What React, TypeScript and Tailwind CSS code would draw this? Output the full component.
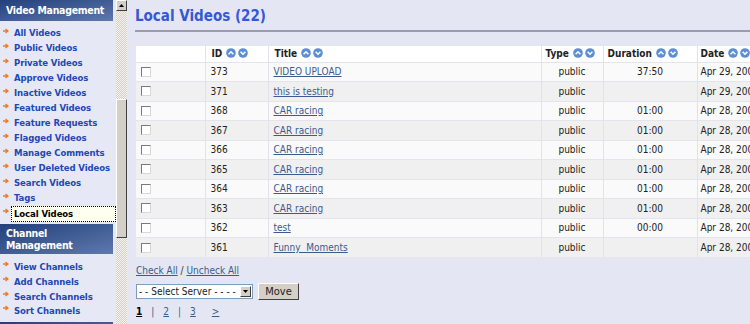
import React from "react";

const font = "font-['DejaVu_Sans_Condensed','DejaVu_Sans',sans-serif]";

const videoLinks = [
  "All Videos",
  "Public Videos",
  "Private Videos",
  "Approve Videos",
  "Inactive Videos",
  "Featured Videos",
  "Feature Requests",
  "Flagged Videos",
  "Manage Comments",
  "User Deleted Videos",
  "Search Videos",
  "Tags",
];

const channelLinks = ["View Channels", "Add Channels", "Search Channels", "Sort Channels"];

const rows = [
  { id: 373, title: "VIDEO UPLOAD", type: "public", duration: "37:50", date: "Apr 29, 2008" },
  { id: 371, title: "this is testing", type: "public", duration: "", date: "Apr 29, 2008" },
  { id: 368, title: "CAR racing", type: "public", duration: "01:00", date: "Apr 28, 2008" },
  { id: 367, title: "CAR racing", type: "public", duration: "01:00", date: "Apr 28, 2008" },
  { id: 366, title: "CAR racing", type: "public", duration: "01:00", date: "Apr 28, 2008" },
  { id: 365, title: "CAR racing", type: "public", duration: "01:00", date: "Apr 28, 2008" },
  { id: 364, title: "CAR racing", type: "public", duration: "01:00", date: "Apr 28, 2008" },
  { id: 363, title: "CAR racing", type: "public", duration: "01:00", date: "Apr 28, 2008" },
  { id: 362, title: "test", type: "public", duration: "00:00", date: "Apr 28, 2008" },
  { id: 361, title: "Funny  Moments", type: "public", duration: "", date: "Apr 28, 2008" },
];

function Arrow() {
  return (
    <svg width="6" height="6" viewBox="0 0 6 6" className="shrink-0 mt-[-6px]">
      <path d="M0 3H4M2.5 1L5 3L2.5 5" stroke="#f07a22" strokeWidth="1.4" fill="none" />
    </svg>
  );
}

function SortIcons() {
  return (
    <span className="inline-flex gap-[2px] ml-[4px] align-[-1px]">
      <svg width="10" height="10" viewBox="0 0 10 10">
        <circle cx="5" cy="5" r="4.8" fill="#5b8ed6" />
        <path d="M2.6 6.2L5 3.8L7.4 6.2" stroke="#fff" strokeWidth="1.6" fill="none" />
      </svg>
      <svg width="10" height="10" viewBox="0 0 10 10">
        <circle cx="5" cy="5" r="4.8" fill="#5b8ed6" />
        <path d="M2.6 3.8L5 6.2L7.4 3.8" stroke="#fff" strokeWidth="1.6" fill="none" />
      </svg>
    </span>
  );
}

function SideHeader({ children, tight }: { children: React.ReactNode; tight?: boolean }) {
  return (
    <div
      className={`w-[113px] bg-gradient-to-br from-[#23407c] to-[#5f79ad] text-white font-bold text-[10.5px] tracking-[-0.3px] leading-[11px] px-[6px] whitespace-nowrap ${
        tight ? "py-[3px]" : "py-[4px]"
      }`}
    >
      {children}
    </div>
  );
}

function Checkbox() {
  return (
    <div className="w-[10px] h-[10px] bg-white border border-t-[#7a7a7a] border-l-[#7a7a7a] border-b-[#d8d8d8] border-r-[#d8d8d8]" />
  );
}

export default function App() {
  return (
    <div className={`${font} w-[750px] h-[324px] overflow-hidden flex bg-[#e4e7f3]`}>
      {/* Sidebar */}
      <div className="w-[128px] shrink-0 flex bg-[#e6e9f5]">
        <div className="w-[116px]">
          <SideHeader>
            <div className="py-[1px]">Video Management</div>
          </SideHeader>
          <ul className="pt-[5px]">
            {videoLinks.map((l) => (
              <li key={l} className="flex items-center gap-[4px] pl-[3px] h-[15px] text-[9.5px] tracking-[-0.1px] font-bold text-[#2347b4] whitespace-nowrap">
                <Arrow />
                <span className="pl-[1px]">{l}</span>
              </li>
            ))}
            <li className="flex items-center gap-[2px] pl-[3px] h-[15px] text-[9.5px] tracking-[-0.1px] font-bold">
              <Arrow />
              <span className="flex-1 h-[16px] border border-dotted border-black bg-[#fffff0] pl-[2px] leading-[14px] text-black">
                Local Videos
              </span>
            </li>
          </ul>
          <div className="pt-[3px]">
            <SideHeader tight>
              <div className="py-[0.5px]">Channel</div>
              <div className="py-[0.5px]">Management</div>
            </SideHeader>
          </div>
          <ul className="pt-[6px] pb-[3px]">
            {channelLinks.map((l) => (
              <li key={l} className="flex items-center gap-[4px] pl-[3px] h-[14.7px] text-[9.5px] tracking-[-0.1px] font-bold text-[#2347b4] whitespace-nowrap">
                <Arrow />
                <span className="pl-[1px]">{l}</span>
              </li>
            ))}
          </ul>
          <SideHeader>&nbsp;</SideHeader>
        </div>
        {/* scrollbar */}
        <div className="w-[11px] flex flex-col bg-[repeating-conic-gradient(#d4d0c8_0%_25%,#f4f3ef_0%_50%)] bg-[length:2px_2px]">
          <div className="h-[11px] bg-[#d4d0c8] border border-t-white border-l-white border-b-[#404040] border-r-[#404040] flex items-center justify-center">
            <svg width="5" height="3" viewBox="0 0 5 3">
              <path d="M0 3L2.5 0L5 3Z" fill="#000" />
            </svg>
          </div>
          <div className="h-[88px]" />
          <div className="h-[139px] bg-[#d4d0c8] border border-t-white border-l-white border-b-[#404040] border-r-[#404040]" />
        </div>
      </div>

      {/* Main */}
      <div className="flex-1 pl-[7px] pt-[7px] min-w-0">
        <h1 className="text-[15px] font-bold text-[#3558d8] leading-[18px]">Local Videos (22)</h1>
        <div className="mt-[5px] h-[2px] bg-[#9a9cab] w-[700px]" />
        <table className="mt-[14px] ml-[1px] border-collapse text-[10px] text-[#222] table-fixed w-[700px]">
          <colgroup>
            <col className="w-[69px]" />
            <col className="w-[63px]" />
            <col className="w-[273px]" />
            <col className="w-[62px]" />
            <col className="w-[94px]" />
            <col className="w-[139px]" />
          </colgroup>
          <thead>
            <tr className="h-[16px] bg-white text-left font-bold">
              <th className="border-r border-[#e2e2ea]" />
              <th className="pl-[6px] border-r border-[#e2e2ea]">ID<SortIcons /></th>
              <th className="pl-[6px] border-r border-[#e2e2ea]">Title<SortIcons /></th>
              <th className="pl-[4px] border-r border-[#e2e2ea]">Type<SortIcons /></th>
              <th className="pl-[4px] border-r border-[#e2e2ea]">Duration<SortIcons /></th>
              <th className="pl-[3px]">Date<SortIcons /></th>
            </tr>
          </thead>
          <tbody>
            {rows.map((r, i) => (
              <tr key={r.id} className={`h-[19.5px] border-t border-[#e4e4ec] ${i % 2 === 0 ? "bg-[#fafafa]" : "bg-[#f0f0f0]"}`}>
                <td className="pl-[5px] border-r border-[#e2e2ea]">
                  <Checkbox />
                </td>
                <td className="pl-[5px] border-r border-[#e2e2ea]">{r.id}</td>
                <td className="pl-[5px] border-r border-[#e2e2ea]">
                  <a href="#" className="underline text-[#3c5b8c] whitespace-pre">{r.title}</a>
                </td>
                <td className="text-center border-r border-[#e2e2ea]">{r.type}</td>
                <td className="text-center border-r border-[#e2e2ea]">{r.duration}</td>
                <td className="pl-[3px] whitespace-nowrap">{r.date}</td>
              </tr>
            ))}
          </tbody>
        </table>

        <div className="mt-[7px] text-[10px] text-[#333] pl-[1px] leading-[14px]">
          <a href="#" className="underline text-[#3c5b8c]">Check All</a> / <a href="#" className="underline text-[#3c5b8c]">Uncheck All</a>
        </div>

        <div className="mt-[5px] flex items-center gap-[5px] pl-[1px]">
          <div className="w-[117px] h-[15px] bg-white border border-[#7f9db9] flex items-center text-[10px] text-[#222]">
            <span className="flex-1 pl-[2px] leading-[13px] whitespace-nowrap">- - Select Server - - - -</span>
            <div className="w-[11px] h-[11px] mr-[1px] bg-[#d4d0c8] border border-t-white border-l-white border-b-[#404040] border-r-[#404040] flex items-center justify-center">
              <svg width="5" height="3" viewBox="0 0 5 3">
                <path d="M0 0L2.5 3L5 0Z" fill="#000" />
              </svg>
            </div>
          </div>
          <button className="w-[41px] h-[17px] bg-[#d4d0c8] border border-t-white border-l-white border-b-[#404040] border-r-[#404040] text-[11px] text-[#222] leading-[14px]">
            Move
          </button>
        </div>

        <div className="mt-[5px] flex items-center text-[10px] pl-[1px] leading-[14px]">
          <a href="#" className="underline font-bold text-black">1</a>
          <span className="ml-[9px] text-[#3c5b8c]">|</span>
          <a href="#" className="ml-[9px] underline text-[#3c5b8c]">2</a>
          <span className="ml-[9px] text-[#3c5b8c]">|</span>
          <a href="#" className="ml-[9px] underline text-[#3c5b8c]">3</a>
          <a href="#" className="ml-[16px] underline text-[#3c5b8c]">&gt;</a>
        </div>
      </div>
    </div>
  );
}
